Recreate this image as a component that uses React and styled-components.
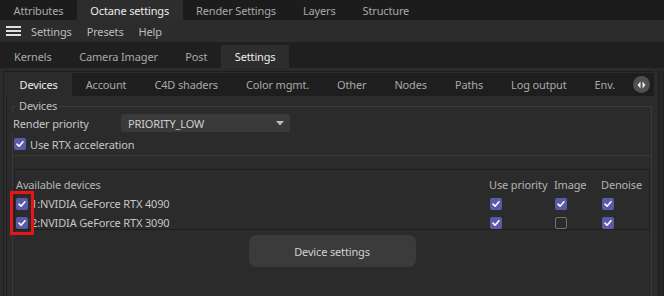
import React from "react";
import styled, { createGlobalStyle } from "styled-components";

const GlobalStyle = createGlobalStyle`
  html, body {
    margin: 0;
    padding: 0;
    background: #2b2b2b;
    overflow: hidden;
  }
  body {
    font-family: "Noto Sans", "Liberation Sans", sans-serif;
    font-size: 11px;
    letter-spacing: -0.15px;
    color: #c4c4c4;
    white-space: nowrap;
  }
`;

function Check({ on = true }) {
  return (
    <Box $on={on}>
      {on && (
        <svg width="10" height="10" viewBox="0 0 10 10">
          <path d="M2 5.2 L4.1 7.2 L8 2.8" fill="none" stroke="#fff" strokeWidth="1.6" strokeLinecap="round" strokeLinejoin="round" />
        </svg>
      )}
    </Box>
  );
}

function App() {
  const topTabs = ["Attributes", "Octane settings", "Render Settings", "Layers", "Structure"];
  const subTabs = ["Kernels", "Camera Imager", "Post", "Settings"];
  const innerTabs = ["Devices", "Account", "C4D shaders", "Color mgmt.", "Other", "Nodes", "Paths", "Log output", "Env."];
  const devices = [
    { name: "1:NVIDIA GeForce RTX 4090", prio: true, image: true, denoise: true },
    { name: "2:NVIDIA GeForce RTX 3090", prio: true, image: false, denoise: true },
  ];

  return (
    <Root>
      <GlobalStyle />
      <TopBar>
        {topTabs.map((t) => (
          <TopTab key={t} $active={t === "Octane settings"}>{t}</TopTab>
        ))}
      </TopBar>
      <MenuBar>
        <Burger>
          <span />
          <span />
          <span />
        </Burger>
        <MenuItem>Settings</MenuItem>
        <MenuItem>Presets</MenuItem>
        <MenuItem>Help</MenuItem>
      </MenuBar>
      <SubBar>
        {subTabs.map((t) => (
          <SubTab key={t} $active={t === "Settings"}>{t}</SubTab>
        ))}
      </SubBar>
      <Body>
        <Frame>
          <InnerBar>
            {innerTabs.map((t) => (
              <InnerTab key={t} $active={t === "Devices"}>{t}</InnerTab>
            ))}
            <ScrollBtn>
              <svg width="9" height="8" viewBox="0 0 9 8">
                <path d="M3.5 0.5 L0.5 4 L3.5 7.5 Z" fill="#eee" />
                <path d="M5.5 0.5 L8.5 4 L5.5 7.5 Z" fill="#eee" />
              </svg>
            </ScrollBtn>
          </InnerBar>
          <Content>
            <Group>
              <Legend>Devices</Legend>
              <FieldRow>
                <Label>Render priority</Label>
                <Select>
                  <span>PRIORITY_LOW</span>
                  <svg width="8" height="5" viewBox="0 0 8 5">
                    <path d="M0 0 L8 0 L4 4.5 Z" fill="#bdbdbd" />
                  </svg>
                </Select>
              </FieldRow>
              <CheckRow>
                <Check />
                <span>Use RTX acceleration</span>
              </CheckRow>
              <Separator />
              <DeviceFrame>
                <DeviceGrid>
                  <Head>Available devices</Head>
                  <Head>Use priority</Head>
                  <Head>Image</Head>
                  <Head>Denoise</Head>
                  {devices.map((d) => (
                    <React.Fragment key={d.name}>
                      <NameCell>
                        <Check />
                        <span>{d.name}</span>
                      </NameCell>
                      <Cell><Check on={d.prio} /></Cell>
                      <Cell><Check on={d.image} /></Cell>
                      <Cell><Check on={d.denoise} /></Cell>
                    </React.Fragment>
                  ))}
                </DeviceGrid>
                <Highlight />
              </DeviceFrame>
              <ButtonRow>
                <Button>Device settings</Button>
              </ButtonRow>
            </Group>
          </Content>
        </Frame>
        <RightRail />
      </Body>
    </Root>
  );
}

export default App;

const Root = styled.div`
  width: 664px;
  height: 296px;
  display: flex;
  flex-direction: column;
  background: #2b2b2b;
`;

const TopBar = styled.div`
  height: 20px;
  display: flex;
  background: #1c1c1c;
`;

const TopTab = styled.div`
  display: flex;
  align-items: center;
  padding: 0 13.5px;
  color: ${(p) => (p.$active ? "#ececec" : "#a9a9a9")};
  background: ${(p) => (p.$active ? "#2d2d2d" : "transparent")};
`;

const MenuBar = styled.div`
  height: 22px;
  display: flex;
  align-items: center;
  background: #2c2c2c;
  border-bottom: 2px solid #1f1f1f;
  padding-left: 6px;
`;

const Burger = styled.div`
  width: 15px;
  display: flex;
  flex-direction: column;
  gap: 2px;
  margin-right: 10px;
  span {
    height: 2px;
    background: #e0e0e0;
  }
`;

const MenuItem = styled.div`
  color: #bdbdbd;
  margin-right: 15px;
`;

const SubBar = styled.div`
  height: 23px;
  display: flex;
  align-items: stretch;
  background: #1f1f1f;
  padding-top: 1px;
`;

const SubTab = styled.div`
  display: flex;
  align-items: center;
  padding: 0 13.5px 0 14px;
  color: ${(p) => (p.$active ? "#ececec" : "#a9a9a9")};
  background: ${(p) => (p.$active ? "#2d2d2d" : "transparent")};
`;

const Body = styled.div`
  flex: 1;
  display: flex;
  padding: 3px 0 0 3px;
  min-height: 0;
`;

const Frame = styled.div`
  flex: 1;
  display: flex;
  flex-direction: column;
  border-left: 1px solid #1e1e1e;
  border-top: 1px solid #1e1e1e;
  padding: 1px 0 0 2px;
  min-width: 0;
`;

const InnerBar = styled.div`
  height: 23px;
  display: flex;
  align-items: stretch;
  background: #1e1e1e;
`;

const InnerTab = styled.div`
  display: flex;
  align-items: center;
  padding: 0 14.5px 0 13.5px;
  color: ${(p) => (p.$active ? "#ececec" : "#a9a9a9")};
  background: ${(p) => (p.$active ? "#2b2b2b" : "transparent")};
`;

const ScrollBtn = styled.div`
  margin-left: auto;
  margin-right: 4px;
  align-self: center;
  width: 17px;
  height: 17px;
  border-radius: 50%;
  background: #505050;
  display: flex;
  align-items: center;
  justify-content: center;
`;

const Content = styled.div`
  flex: 1;
  border-left: 1px solid #1e1e1e;
  padding: 3px 0 0 5px;
  min-height: 0;
`;

const Group = styled.fieldset`
  margin: 0;
  padding: 0;
  width: 638px;
  border: 1px solid #3a3a3a;
  border-bottom: none;
  min-height: 200px;
`;

const Legend = styled.legend`
  padding: 0 2px;
  margin-left: 4px;
  color: #bfbfbf;
  line-height: 14px;
`;

const FieldRow = styled.div`
  display: flex;
  align-items: center;
  height: 20px;
  margin-left: -1px;
  background: #2b2b2b;
`;

const Label = styled.div`
  width: 108px;
  padding-left: 1px;
  color: #c6c6c6;
`;

const Select = styled.div`
  width: 156px;
  height: 18px;
  border-radius: 3px;
  background: #3a3a3a;
  display: flex;
  align-items: center;
  justify-content: space-between;
  padding: 0 6px 0 7px;
  color: #cfcfcf;
`;

const CheckRow = styled.div`
  display: flex;
  align-items: center;
  gap: 4px;
  height: 22px;
  padding-left: 1px;
  color: #c6c6c6;
`;

const Box = styled.div`
  width: 12px;
  height: 12px;
  box-sizing: border-box;
  border-radius: 2px;
  flex: none;
  display: flex;
  align-items: center;
  justify-content: center;
  background: ${(p) => (p.$on ? "#5b5aa6" : "transparent")};
  border: ${(p) => (p.$on ? "none" : "1.5px solid #707070")};
`;

const Separator = styled.div`
  height: 1px;
  background: #3a3a3a;
  margin: 0 0 13px;
`;

const DeviceFrame = styled.div`
  position: relative;
  margin: 0 1px;
  border: 1px solid #1e1e1e;
  padding: 5px 0 0 1px;
  height: 54px;
`;

const DeviceGrid = styled.div`
  display: grid;
  grid-template-columns: 1fr 65px 47px 48px;
  grid-auto-rows: 19px;
`;

const Head = styled.div`
  display: flex;
  align-items: center;
  color: #b4b4b4;
`;

const NameCell = styled.div`
  display: flex;
  align-items: center;
  gap: 3px;
  color: #c6c6c6;
`;

const Cell = styled.div`
  display: flex;
  align-items: center;
  padding-left: 1px;
`;

const Highlight = styled.div`
  position: absolute;
  left: -5px;
  top: 21px;
  width: 24px;
  height: 44px;
  box-sizing: border-box;
  border: 3px solid #e8141b;
`;

const ButtonRow = styled.div`
  display: flex;
  justify-content: center;
  padding-top: 5px;
`;

const Button = styled.div`
  width: 167px;
  height: 32px;
  border-radius: 7px;
  background: #3b3b3b;
  display: flex;
  align-items: center;
  justify-content: center;
  color: #d2d2d2;
`;

const RightRail = styled.div`
  width: 4px;
  margin-left: 4px;
  border-left: 1px solid #1e1e1e;
  background: #242424;
  border-right: 1px solid #1e1e1e;
`;
